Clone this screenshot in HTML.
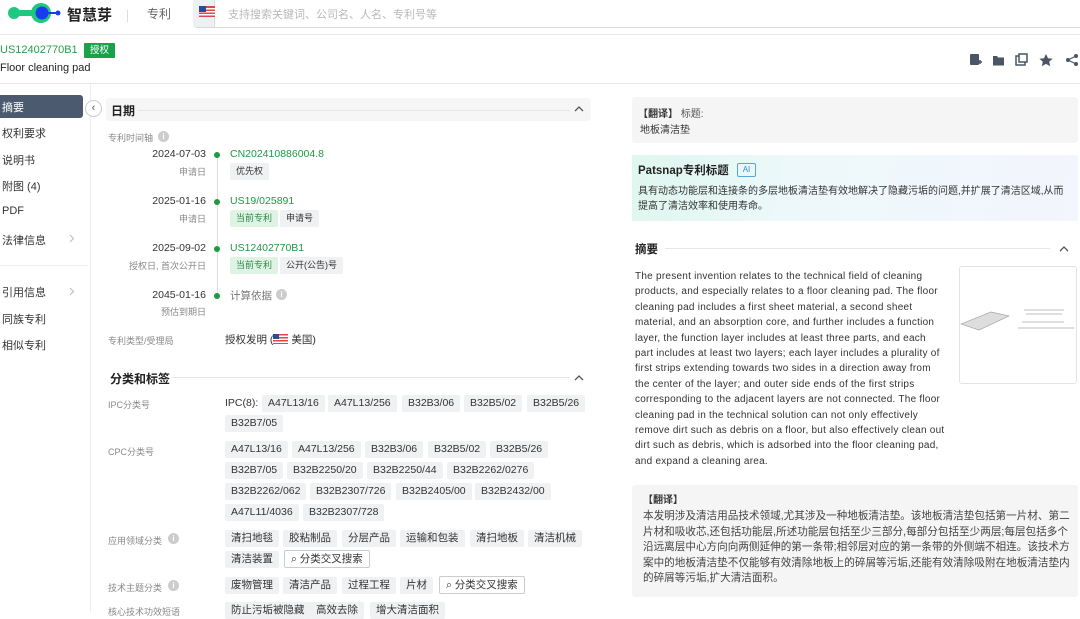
<!DOCTYPE html>
<html><head><meta charset="utf-8"><style>
*{margin:0;padding:0;box-sizing:border-box}
body{width:1080px;height:612px;overflow:hidden;background:#fff;font-family:"Liberation Sans","Noto Sans CJK SC",sans-serif;color:#333;position:relative}
.a{position:absolute;white-space:nowrap}
.chip{position:absolute;height:17px;line-height:17px;padding:0 6px;background:#f0f1f3;font-size:10.5px;color:#333;border-radius:2px;white-space:nowrap}
.lbl{position:absolute;font-size:9px;color:#888;white-space:nowrap}
.g{color:#1d9a45}
.side{position:absolute;left:2px;font-size:11px;color:#333}
.gt{background:#dff3e4;color:#2a8a45}
.srch{background:#fff;border:1px solid #c9ccd1;color:#333}
.info{position:absolute;width:11px;height:11px;border-radius:50%;background:#ccc;color:#fff;font-size:8px;line-height:11px;text-align:center;font-weight:bold}
</style></head><body>
<div class="a" style="left:0;top:0;width:1080px;height:35px;border-bottom:1px solid #e5e7ea"></div>
<svg class="a" style="left:3px;top:1px" width="60" height="24"><circle cx="11" cy="12" r="6" fill="#1fc77f"/><rect x="11" y="9" width="18" height="6" fill="#1fc77f"/><circle cx="38" cy="12" r="10" fill="#1fc77f"/><circle cx="39" cy="12" r="6.5" fill="#1a3cf0"/><rect x="44" y="11" width="10" height="2" fill="#1a3cf0"/><circle cx="55" cy="12" r="2.5" fill="#1a3cf0"/></svg>
<div class="a" style="left:67px;top:4px;font-size:15px;font-weight:bold;color:#222">智慧芽</div>
<div class="a" style="left:127px;top:10px;width:1px;height:12px;background:#ddd"></div>
<div class="a" style="left:147px;top:5px;font-size:12px;color:#666">专利</div>
<div class="a" style="left:193px;top:-1px;width:890px;height:29px;border:1px solid #d8dadd;border-radius:0 0 0 4px"></div>
<div class="a" style="left:193px;top:0;width:22px;height:27px;background:#eef0f2;border-right:1px solid #d8dadd"></div>
<svg class="a" style="left:199px;top:6px" width="16" height="11"><rect width="16" height="11" fill="#e04848"/><rect y="2" width="16" height="1.5" fill="#fff"/><rect y="5" width="16" height="1.5" fill="#fff"/><rect y="8" width="16" height="1.5" fill="#fff"/><rect width="7" height="6" fill="#2c4a9a"/></svg>
<div class="a" style="left:228px;top:6px;font-size:11px;color:#b8b8b8">支持搜索关键词、公司名、人名、专利号等</div>
<div class="a" style="left:0;top:44px;font-size:11px;color:#2a9d4a">US12402770B1</div>
<div class="a" style="left:84px;top:43px;width:31px;height:15px;background:#17a34a;color:#fff;font-size:9.5px;line-height:15px;text-align:center;border-radius:1px">授权</div>
<div class="a" style="left:0;top:62px;font-size:11px;color:#222">Floor cleaning pad</div>
<svg class="a" style="left:968px;top:52px" width="112" height="16" fill="#4a5566">
<rect x="2" y="2" width="9" height="11" rx="1"/><path d="M10 10h4M12 8v4" stroke="#4a5566" stroke-width="1.5"/>
<path d="M25 4h4l1 1.5h6v8h-11z"/>
<rect x="48" y="4" width="9" height="9" fill="none" stroke="#4a5566" stroke-width="1.5"/><rect x="51" y="2" width="8" height="8" fill="#fff" stroke="#4a5566" stroke-width="1.5"/>
<path d="M78 2l2 4.2 4.6.5-3.4 3.1 1 4.5-4.2-2.4-4.2 2.4 1-4.5-3.4-3.1 4.6-.5z"/>
<circle cx="108" cy="4" r="2"/><circle cx="100" cy="8" r="2"/><circle cx="108" cy="12" r="2"/><path d="M108 4l-8 4 8 4" stroke="#4a5566" stroke-width="1.2" fill="none"/></svg>
<div class="a" style="left:0;top:83px;width:1080px;height:1px;background:#e5e7ea"></div>
<div class="a" style="left:90px;top:84px;width:1px;height:528px;background:#eceef0"></div>
<div class="a" style="left:0;top:95px;width:83px;height:23px;background:#4b5a6e;border-radius:0 3px 3px 0"></div>
<div class="side" style="top:99px;color:#fff">摘要</div>
<div class="side" style="top:125px">权利要求</div>
<div class="side" style="top:152px">说明书</div>
<div class="side" style="top:178px">附图 (4)</div>
<div class="side" style="top:205px">PDF</div>
<div class="side" style="top:232px">法律信息</div>
<div class="side" style="top:284px">引用信息</div>
<div class="side" style="top:311px">同族专利</div>
<div class="side" style="top:337px">相似专利</div>
<svg class="a" style="left:69px;top:234px" width="6" height="9"><path d="M1 1l3.5 3.5L1 8" stroke="#bbb" fill="none"/></svg>
<svg class="a" style="left:69px;top:287px" width="6" height="9"><path d="M1 1l3.5 3.5L1 8" stroke="#bbb" fill="none"/></svg>
<div class="a" style="left:0;top:265px;width:88px;height:1px;background:#eceef0"></div>
<div class="a" style="left:85px;top:100px;width:17px;height:17px;border:1px solid #ccc;border-radius:50%;background:#fff;text-align:center;font-size:11px;line-height:14px;color:#555">‹</div>
<div class="a" style="left:106px;top:98px;width:485px;height:23px;background:#f6f6f7;border-radius:3px"></div>
<div class="a" style="left:111px;top:102px;font-size:12px;font-weight:bold;color:#222">日期</div>
<div class="a" style="left:138px;top:110px;width:432px;height:1px;background:#e6e6e6"></div>
<svg class="a" style="left:574px;top:105px" width="10" height="7"><path d="M1 6l4-4 4 4" stroke="#555" stroke-width="1.3" fill="none"/></svg>
<div class="lbl" style="left:108px;top:131px">专利时间轴</div>
<div class="info" style="left:158px;top:131px">i</div>
<div class="a" style="left:217px;top:154px;width:1px;height:142px;background:#ddd"></div>
<div class="a" style="left:214px;top:152px;width:6px;height:6px;border-radius:50%;background:#1d9a45"></div>
<div class="a" style="left:214px;top:199px;width:6px;height:6px;border-radius:50%;background:#1d9a45"></div>
<div class="a" style="left:214px;top:246px;width:6px;height:6px;border-radius:50%;background:#1d9a45"></div>
<div class="a" style="left:214px;top:293px;width:6px;height:6px;border-radius:50%;background:#1d9a45"></div>
<div class="a" style="right:874px;top:148px;font-size:10.5px">2024-07-03</div>
<div class="lbl" style="right:874px;top:165px">申请日</div>
<div class="a g" style="left:230px;top:148px;font-size:10.5px">CN202410886004.8</div>
<div class="chip" style="left:230px;top:163px;font-size:9px">优先权</div>
<div class="a" style="right:874px;top:195px;font-size:10.5px">2025-01-16</div>
<div class="lbl" style="right:874px;top:212px">申请日</div>
<div class="a g" style="left:230px;top:195px;font-size:10.5px">US19/025891</div>
<div class="chip gt" style="left:230px;top:210px;font-size:9px">当前专利</div>
<div class="chip" style="left:280px;top:210px;font-size:9px">申请号</div>
<div class="a" style="right:874px;top:242px;font-size:10.5px">2025-09-02</div>
<div class="lbl" style="right:874px;top:259px">授权日, 首次公开日</div>
<div class="a g" style="left:230px;top:242px;font-size:10.5px">US12402770B1</div>
<div class="chip gt" style="left:230px;top:257px;font-size:9px">当前专利</div>
<div class="chip" style="left:280px;top:257px;font-size:9px">公开(公告)号</div>
<div class="a" style="right:874px;top:289px;font-size:10.5px">2045-01-16</div>
<div class="lbl" style="right:874px;top:305px">预估到期日</div>
<div class="a" style="left:230px;top:288px;font-size:10.5px;color:#777">计算依据</div>
<div class="info" style="left:276px;top:289px">i</div>
<div class="lbl" style="left:108px;top:334px">专利类型/受理局</div>
<div class="a" style="left:225px;top:332px;font-size:10.5px">授权发明 (<span style="display:inline-block;width:15px;height:10px;background:linear-gradient(#2c4a9a 0 50%,transparent 50%) 0 0/6px 100% no-repeat,repeating-linear-gradient(#e04848 0 1.5px,#fff 1.5px 3px);vertical-align:-1px"></span> 美国)</div>
<div class="a" style="left:110px;top:370px;font-size:12px;font-weight:bold;color:#222">分类和标签</div>
<div class="a" style="left:172px;top:377px;width:398px;height:1px;background:#e6e6e6"></div>
<svg class="a" style="left:574px;top:374px" width="10" height="7"><path d="M1 6l4-4 4 4" stroke="#555" stroke-width="1.3" fill="none"/></svg>
<div class="lbl" style="left:108px;top:398px">IPC分类号</div>
<div class="a" style="left:225px;top:397px;font-size:10.5px">IPC(8):</div>
<div class="chip" style="left:262px;top:395px">A47L13/16</div>
<div class="chip" style="left:328px;top:395px">A47L13/256</div>
<div class="chip" style="left:402px;top:395px">B32B3/06</div>
<div class="chip" style="left:464px;top:395px">B32B5/02</div>
<div class="chip" style="left:527px;top:395px">B32B5/26</div>
<div class="chip" style="left:225px;top:415px">B32B7/05</div>
<div class="lbl" style="left:108px;top:445px">CPC分类号</div>
<div class="chip" style="left:225px;top:441px">A47L13/16</div>
<div class="chip" style="left:292px;top:441px">A47L13/256</div>
<div class="chip" style="left:365px;top:441px">B32B3/06</div>
<div class="chip" style="left:428px;top:441px">B32B5/02</div>
<div class="chip" style="left:490px;top:441px">B32B5/26</div>
<div class="chip" style="left:225px;top:462px">B32B7/05</div>
<div class="chip" style="left:287px;top:462px">B32B2250/20</div>
<div class="chip" style="left:367px;top:462px">B32B2250/44</div>
<div class="chip" style="left:447px;top:462px">B32B2262/0276</div>
<div class="chip" style="left:225px;top:483px">B32B2262/062</div>
<div class="chip" style="left:310px;top:483px">B32B2307/726</div>
<div class="chip" style="left:396px;top:483px">B32B2405/00</div>
<div class="chip" style="left:475px;top:483px">B32B2432/00</div>
<div class="chip" style="left:225px;top:504px">A47L11/4036</div>
<div class="chip" style="left:303px;top:504px">B32B2307/728</div>
<div class="lbl" style="left:108px;top:534px">应用领域分类</div>
<div class="info" style="left:168px;top:533px">i</div>
<div class="chip" style="left:225px;top:530px">清扫地毯</div>
<div class="chip" style="left:283px;top:530px">胶粘制品</div>
<div class="chip" style="left:342px;top:530px">分层产品</div>
<div class="chip" style="left:400px;top:530px">运输和包装</div>
<div class="chip" style="left:470px;top:530px">清扫地板</div>
<div class="chip" style="left:528px;top:530px">清洁机械</div>
<div class="chip" style="left:225px;top:551px">清洁装置</div>
<div class="chip srch" style="left:284px;top:550px;height:18px">⌕ 分类交叉搜索</div>
<div class="lbl" style="left:108px;top:581px">技术主题分类</div>
<div class="info" style="left:168px;top:580px">i</div>
<div class="chip" style="left:225px;top:577px">废物管理</div>
<div class="chip" style="left:283px;top:577px">清洁产品</div>
<div class="chip" style="left:342px;top:577px">过程工程</div>
<div class="chip" style="left:400px;top:577px">片材</div>
<div class="chip srch" style="left:439px;top:576px;height:18px">⌕ 分类交叉搜索</div>
<div class="lbl" style="left:108px;top:605px">核心技术功效短语</div>
<div class="chip" style="left:225px;top:602px">防止污垢被隐藏</div>
<div class="chip" style="left:310px;top:602px">高效去除</div>
<div class="chip" style="left:370px;top:602px">增大清洁面积</div>
<div class="a" style="left:632px;top:97px;width:446px;height:46px;background:#f5f5f6;border-radius:3px"></div>
<div class="a" style="left:638px;top:105px;font-size:10px"><b>【翻译】</b> <span style="color:#555">标题:</span></div>
<div class="a" style="left:640px;top:121px;font-size:10px">地板清洁垫</div>
<div class="a" style="left:632px;top:155px;width:446px;height:66px;background:linear-gradient(100deg,#dff7ee 0%,#eef8fb 40%,#f3f6fc 100%)"></div>
<div class="a" style="left:638px;top:162px;font-size:11.5px;font-weight:bold;color:#222">Patsnap专利标题</div>
<div class="a" style="left:737px;top:163px;width:19px;height:14px;border:1px solid #58a4e0;border-radius:2px;font-size:8px;line-height:12px;text-align:center;color:#3a8ad0">AI</div>
<div class="a" style="left:638px;top:184px;font-size:10px;line-height:15px;white-space:normal;width:428px;color:#333">具有动态功能层和连接条的多层地板清洁垫有效地解决了隐藏污垢的问题,并扩展了清洁区域,从而提高了清洁效率和使用寿命。</div>
<div class="a" style="left:635px;top:241px;font-size:11.5px;font-weight:bold;color:#222">摘要</div>
<div class="a" style="left:665px;top:248px;width:385px;height:1px;background:#e6e6e6"></div>
<svg class="a" style="left:1059px;top:245px" width="10" height="7"><path d="M1 6l4-4 4 4" stroke="#555" stroke-width="1.3" fill="none"/></svg>
<div class="a" style="left:635px;top:269px;width:311px;font-size:10px;letter-spacing:.25px;line-height:15.4px;white-space:normal;color:#333">The present invention relates to the technical field of cleaning products, and especially relates to a floor cleaning pad. The floor cleaning pad includes a first sheet material, a second sheet material, and an absorption core, and further includes a function layer, the function layer includes at least three parts, and each part includes at least two layers; each layer includes a plurality of first strips extending towards two sides in a direction away from the center of the layer; and outer side ends of the first strips corresponding to the adjacent layers are not connected. The floor cleaning pad in the technical solution can not only effectively remove dirt such as debris on a floor, but also effectively clean out dirt such as debris, which is adsorbed into the floor cleaning pad, and expand a cleaning area.</div>
<div class="a" style="left:959px;top:266px;width:118px;height:118px;border:1px solid #e3e3e3;border-radius:3px"></div>
<svg class="a" style="left:960px;top:300px" width="116" height="40"><path d="M1 24l30-12 18 4-30 14z" fill="#ddd" stroke="#999" stroke-width=".6"/><path d="M64 10h40M62 22h42M66 14h36M58 28h56" stroke="#aaa" stroke-width=".7"/></svg>
<div class="a" style="left:632px;top:485px;width:446px;height:112px;background:#f5f5f6;border-radius:3px"></div>
<div class="a" style="left:643px;top:491px;font-size:10px;font-weight:bold">【翻译】</div>
<div class="a" style="left:643px;top:509px;width:430px;font-size:10.6px;line-height:15.5px;white-space:normal;color:#444">本发明涉及清洁用品技术领域,尤其涉及一种地板清洁垫。该地板清洁垫包括第一片材、第二片材和吸收芯,还包括功能层,所述功能层包括至少三部分,每部分包括至少两层;每层包括多个沿远离层中心方向向两侧延伸的第一条带;相邻层对应的第一条带的外侧端不相连。该技术方案中的地板清洁垫不仅能够有效清除地板上的碎屑等污垢,还能有效清除吸附在地板清洁垫内的碎屑等污垢,扩大清洁面积。</div>
</body></html>
